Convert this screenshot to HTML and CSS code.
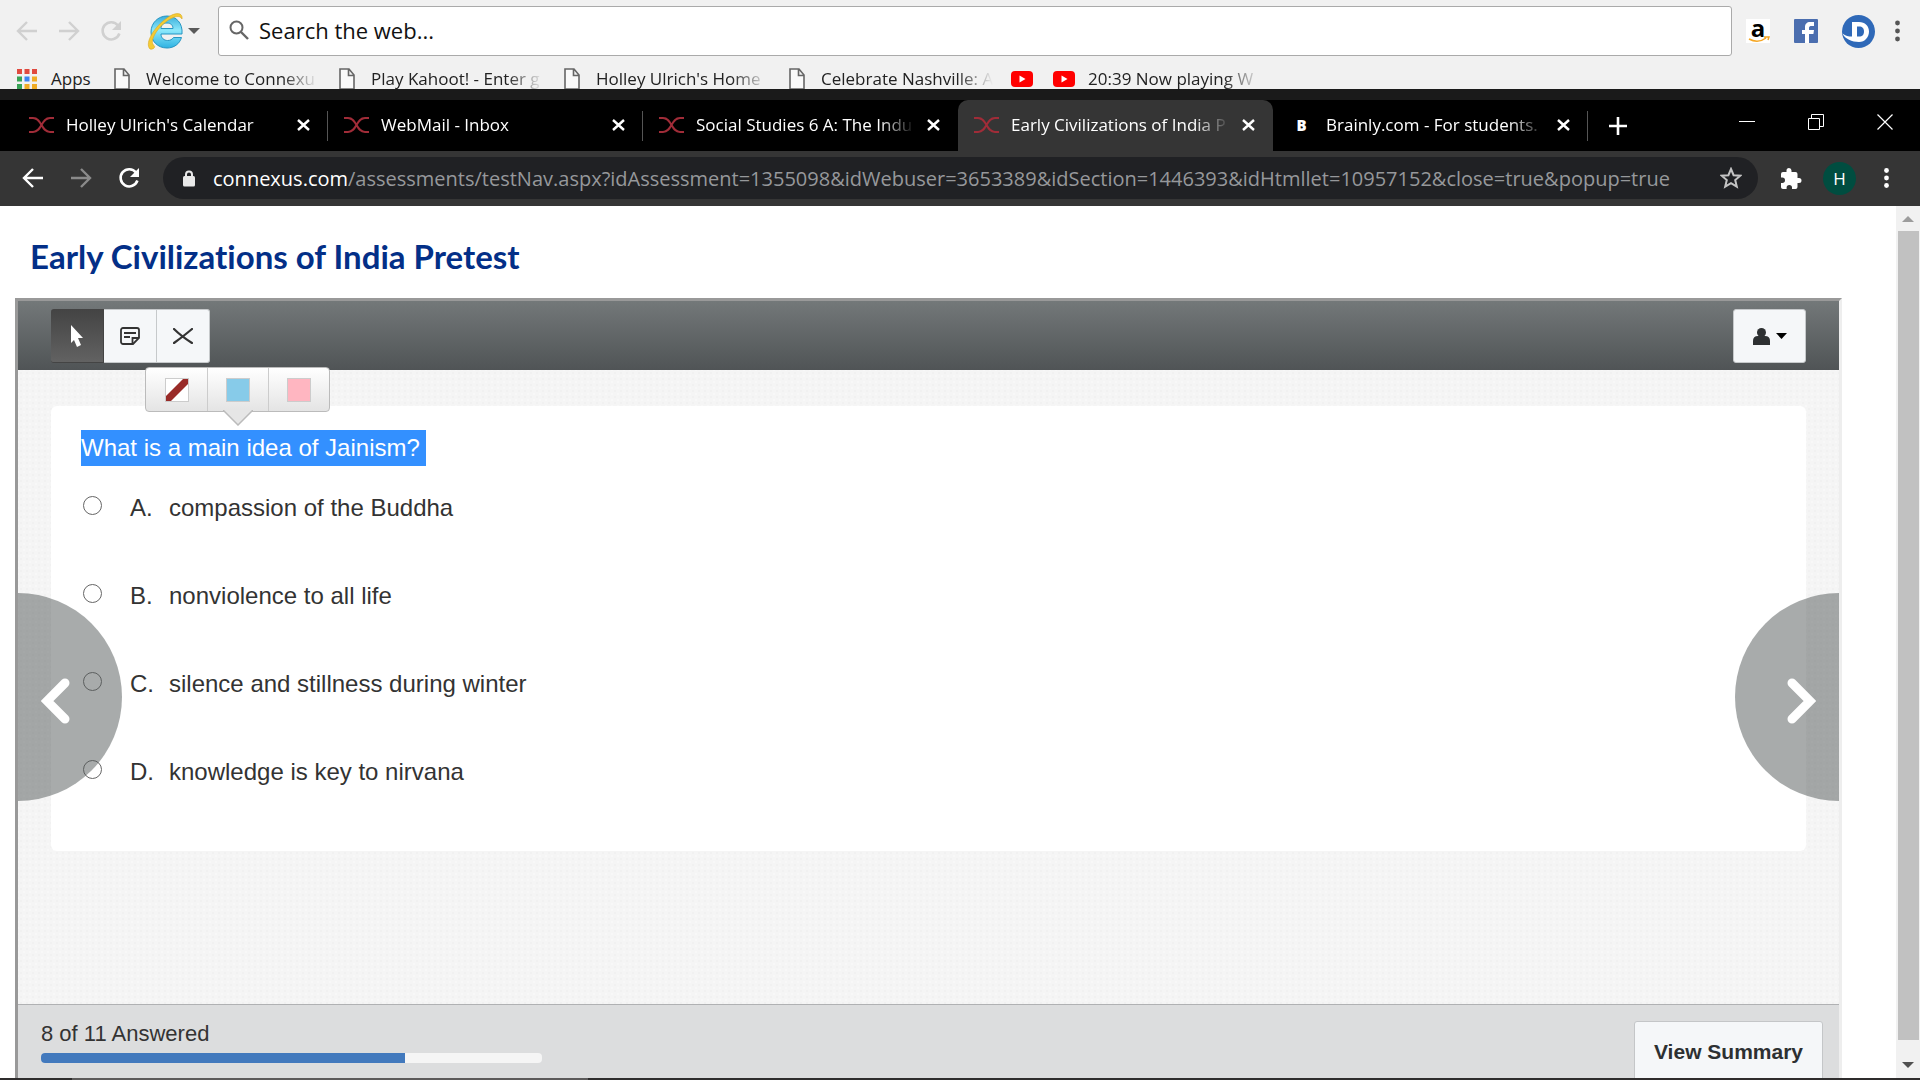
FILE: index.html
```html
<!DOCTYPE html>
<html lang="en">
<head>
    <meta charset="UTF-8">
    <meta name="viewport" content="width=device-width, initial-scale=1.0">
    <title>Early Civilizations of India Pretest</title>
    <link rel="stylesheet" href="styles.css">
</head>
<body>
    <!-- search toolbar -->
    <div class="searchbar">
      <div class="search-nav">
        <button class="icon-btn" aria-label="Back"><svg width="22" height="22" viewBox="0 0 22 22"><path d="M21 11H2M11 2l-9 9 9 9" fill="none" stroke="#d0d0d0" stroke-width="2.4"/></svg></button>
        <button class="icon-btn" aria-label="Forward"><svg width="22" height="22" viewBox="0 0 22 22"><path d="M1 11h19M11 2l9 9-9 9" fill="none" stroke="#d0d0d0" stroke-width="2.4"/></svg></button>
        <button class="icon-btn" aria-label="Reload"><svg width="22" height="22" viewBox="0 0 22 22"><path d="M18 5.5A8.6 8.6 0 1 0 19.400 13.500" fill="none" stroke="#d0d0d0" stroke-width="2.600"/><path d="M21 1v9h-9z" fill="#d0d0d0"/></svg></button>
      </div>
      <button class="icon-btn engine" aria-label="Search engine">
        <svg width="38" height="38" viewBox="0 0 38 38">
          <defs>
            <linearGradient id="ie" x1="0" y1="0" x2="0" y2="1"><stop offset="0" stop-color="#3aaedb"/><stop offset=".45" stop-color="#8ce8fb"/><stop offset="1" stop-color="#2fb2e2"/></linearGradient>
          </defs>
          <path d="M35 22H14c0 4 3 6.500 6.500 6.500 2.800 0 4.500-1 6-3h8C32.500 32 27 36 20 36 10.500 36 4 29 4 20S11 4 20 4s16 7 15 18zM14 16.500h12c0-3.500-2.500-5.500-6-5.500s-6 2-6 5.500z" fill="url(#ie)" stroke="#2795c2" stroke-width="1"/>
          <path d="M3 37C-3 31 8 14 20 6 28 0 36 0 35 7 33 3 27 4 20 9 9 17 2 30 7 33.500 9 35 6 38 3 37z" fill="#f5cb35" stroke="#d9a820" stroke-width=".6"/>
        </svg>
        <svg width="12" height="6" viewBox="0 0 12 6"><path d="M0 0h12L6 6z" fill="#5a5a5a"/></svg>
      </button>
      <form class="search-box">
        <label for="search" aria-label="Search"><svg width="20" height="20" viewBox="0 0 20 20"><circle cx="7.500" cy="7.500" r="6" fill="none" stroke="#666" stroke-width="2"/><path d="M12 12l7 7" stroke="#666" stroke-width="2.400"/></svg></label>
        <input type="text" id="search" placeholder="Search the web...">
      </form>
      <div class="shortcuts">
        <a href="#" aria-label="Amazon"><svg width="24" height="24" viewBox="0 0 24 24"><rect width="24" height="24" fill="#fff"/><text x="12" y="18" text-anchor="middle" class="logo-a">a</text><path d="M3 20q9 5 17-1M18 18h5l-1 3" fill="none" stroke="#f5a623" stroke-width="1.500"/></svg></a>
        <a href="#" aria-label="Facebook"><svg width="24" height="24" viewBox="0 0 24 24"><rect width="24" height="24" rx="1" fill="#4b6eaf"/><path d="M11 24v-9H8v-4h3V8c0-3 2-5 5-5h4v4h-2.500C16 7 15 7.600 15 9v2h5l-.6 4H15v9z" fill="#fff"/></svg></a>
        <a href="#" aria-label="Dictionary"><svg width="33" height="33" viewBox="0 0 33 33"><circle cx="16.500" cy="16.500" r="16.500" fill="#2f69b8"/><path d="M10 7h7c6 0 10 4 10 9.500S23 27 17 27C10 27 3 24 .5 18.500c3 2.500 6 3 9.500 3z" fill="#fff"/><path d="M15 11.500h2c3.500 0 5 2 5 5s-1.500 5-5 5h-2z" fill="#2f69b8"/></svg></a>
        <button class="icon-btn" aria-label="Menu"><svg width="5" height="22" viewBox="0 0 5 22" fill="#555"><circle cx="2.500" cy="3" r="2.400"/><circle cx="2.500" cy="11" r="2.400"/><circle cx="2.500" cy="19" r="2.400"/></svg></button>
      </div>
    </div>

    <div class="bookmarks">
      <a href="#" class="apps">
        <svg width="20" height="20" viewBox="0 0 20 20"><path d="M0 0h5v5H0zM7.500 0h5v5h-5zM15 0h5v5h-5z" fill="#e04a3f"/><path d="M0 7.500h5v5H0zM0 15h5v5H0z" fill="#37a355"/><path d="M7.500 7.500h5v5h-5z" fill="#3b83f0"/><path d="M15 7.500h5v5h-5zM7.500 15h5v5h-5zM15 15h5v5h-5z" fill="#f0ac25"/></svg>
        <span>Apps</span>
      </a>
      <a href="#" class="bookmark"><svg width="16" height="22" viewBox="0 0 16 22"><path d="M1 1h9l5 6v14H1zM9.500 1v6.500H15" fill="#fafafa" stroke="#666" stroke-width="1.600"/></svg><span class="fade">Welcome to Connexu</span></a>
      <a href="#" class="bookmark"><svg width="16" height="22" viewBox="0 0 16 22"><path d="M1 1h9l5 6v14H1zM9.500 1v6.500H15" fill="#fafafa" stroke="#666" stroke-width="1.600"/></svg><span class="fade">Play Kahoot! - Enter g</span></a>
      <a href="#" class="bookmark"><svg width="16" height="22" viewBox="0 0 16 22"><path d="M1 1h9l5 6v14H1zM9.500 1v6.500H15" fill="#fafafa" stroke="#666" stroke-width="1.600"/></svg><span class="fade">Holley Ulrich's Home</span></a>
      <a href="#" class="bookmark"><svg width="16" height="22" viewBox="0 0 16 22"><path d="M1 1h9l5 6v14H1zM9.500 1v6.500H15" fill="#fafafa" stroke="#666" stroke-width="1.600"/></svg><span class="fade">Celebrate Nashville: A</span></a>
      <a href="#" class="tube" aria-label="YouTube"><svg width="22" height="16" viewBox="0 0 22 16"><rect width="22" height="16" rx="4" fill="#f00"/><path d="M8.500 4.500l6 3.500-6 3.500z" fill="#fff"/></svg></a>
      <a href="#" class="tube"><svg width="22" height="16" viewBox="0 0 22 16"><rect width="22" height="16" rx="4" fill="#f00"/><path d="M8.500 4.500l6 3.500-6 3.500z" fill="#fff"/></svg><span class="fade">20:39 Now playing W</span></a>
    </div>

    <!-- browser tabs -->
    <div class="tabs">
      <div class="tab">
        <svg width="25" height="16" viewBox="0 0 25 16"><path d="M0 1h4c9 0 8 14 17 14h4M25 1h-4c-9 0-8 14-17 14H0" fill="none" stroke="#a02c38" stroke-width="2"/></svg>
        <a href="#" class="fade">Holley Ulrich's Calendar</a>
        <button class="icon-btn" aria-label="Close tab"><svg width="13" height="12" viewBox="0 0 13 12"><path d="M1 1l11 10M12 1L1 11" stroke="#fff" stroke-width="2.400"/></svg></button>
      </div>
      <div class="tab">
        <svg width="25" height="16" viewBox="0 0 25 16"><path d="M0 1h4c9 0 8 14 17 14h4M25 1h-4c-9 0-8 14-17 14H0" fill="none" stroke="#a02c38" stroke-width="2"/></svg>
        <a href="#" class="fade">WebMail - Inbox</a>
        <button class="icon-btn" aria-label="Close tab"><svg width="13" height="12" viewBox="0 0 13 12"><path d="M1 1l11 10M12 1L1 11" stroke="#fff" stroke-width="2.400"/></svg></button>
      </div>
      <div class="tab before-active">
        <svg width="25" height="16" viewBox="0 0 25 16"><path d="M0 1h4c9 0 8 14 17 14h4M25 1h-4c-9 0-8 14-17 14H0" fill="none" stroke="#a02c38" stroke-width="2"/></svg>
        <a href="#" class="fade">Social Studies 6 A: The Indu</a>
        <button class="icon-btn" aria-label="Close tab"><svg width="13" height="12" viewBox="0 0 13 12"><path d="M1 1l11 10M12 1L1 11" stroke="#fff" stroke-width="2.400"/></svg></button>
      </div>
      <div class="tab active">
        <svg width="25" height="16" viewBox="0 0 25 16"><path d="M0 1h4c9 0 8 14 17 14h4M25 1h-4c-9 0-8 14-17 14H0" fill="none" stroke="#a02c38" stroke-width="2"/></svg>
        <a href="#" class="fade">Early Civilizations of India P</a>
        <button class="icon-btn" aria-label="Close tab"><svg width="13" height="12" viewBox="0 0 13 12"><path d="M1 1l11 10M12 1L1 11" stroke="#fff" stroke-width="2.400"/></svg></button>
      </div>
      <div class="tab">
        <span class="brainly">B</span>
        <a href="#" class="fade">Brainly.com - For students.</a>
        <button class="icon-btn" aria-label="Close tab"><svg width="13" height="12" viewBox="0 0 13 12"><path d="M1 1l11 10M12 1L1 11" stroke="#fff" stroke-width="2.400"/></svg></button>
      </div>
      <button class="icon-btn new-tab" aria-label="New tab"><svg width="18" height="18" viewBox="0 0 18 18"><path d="M9 0v18M0 9h18" stroke="#fff" stroke-width="2.600"/></svg></button>
      <div class="window-controls">
        <button class="icon-btn" aria-label="Minimize"><svg width="16" height="16" viewBox="0 0 16 16"><path d="M0 7.500h16" stroke="#fff"/></svg></button>
        <button class="icon-btn" aria-label="Restore"><svg width="16" height="16" viewBox="0 0 16 16"><path d="M.5 4.500h11v11H.5zM3.500 4.500v-4h12v12h-4" fill="none" stroke="#fff"/></svg></button>
        <button class="icon-btn" aria-label="Close"><svg width="16" height="16" viewBox="0 0 16 16"><path d="M.5.5l15 15M15.500.5l-15 15" stroke="#fff" stroke-width="1.200"/></svg></button>
      </div>
    </div>

    <div class="address-bar">
      <div class="address-nav">
        <button class="icon-btn" aria-label="Back"><svg width="22" height="22" viewBox="0 0 22 22"><path d="M21 11H2M11 2l-9 9 9 9" fill="none" stroke="#fff" stroke-width="2.400"/></svg></button>
        <button class="icon-btn" aria-label="Forward"><svg width="22" height="22" viewBox="0 0 22 22"><path d="M1 11h19M11 2l9 9-9 9" fill="none" stroke="#8a8a8a" stroke-width="2.400"/></svg></button>
        <button class="icon-btn" aria-label="Reload"><svg width="22" height="22" viewBox="0 0 22 22"><path d="M18 5.500A8.600 8.600 0 1 0 19.400 13.500" fill="none" stroke="#fff" stroke-width="2.600"/><path d="M21 1v9h-9z" fill="#fff"/></svg></button>
      </div>
      <div class="address">
        <svg width="12" height="17" viewBox="0 0 12 17"><path d="M3 7V4.500a3 3 0 0 1 6 0V7" fill="none" stroke="#e8e8e8" stroke-width="2"/><rect y="6" width="12" height="10.500" rx="1.500" fill="#e8e8e8"/></svg>
        <div class="url">
          <label for="url">connexus.com</label>
          <input type="text" id="url" value="/assessments/testNav.aspx?idAssessment=1355098&amp;idWebuser=3653389&amp;idSection=1446393&amp;idHtmllet=10957152&amp;close=true&amp;popup=true">
        </div>
        <button class="icon-btn" aria-label="Bookmark this page"><svg width="22" height="22" viewBox="0 0 22 22"><path d="M11 2l2.600 6.200 6.700.5-5.100 4.300 1.600 6.600L11 16.100l-5.800 3.500L6.800 13 1.700 8.700l6.700-.5z" fill="none" stroke="#c4c4c4" stroke-width="2"/></svg></button>
      </div>
      <div class="address-tools">
        <button class="icon-btn" aria-label="Extensions"><svg width="22" height="22" viewBox="0 0 22 22"><path d="M19 11h-1.500V7a2 2 0 0 0-2-2h-4V3.500a2.500 2.500 0 0 0-5 0V5H3a2 2 0 0 0-2 2v3.500h1.300a2.700 2.700 0 0 1 0 5.400H1V20c0 1.100.9 2 2 2h3.600v-1.400a2.700 2.700 0 0 1 5.400 0V22h3.500a2 2 0 0 0 2-2v-4H19a2.500 2.500 0 0 0 0-5z" fill="#fff"/></svg></button>
        <button class="avatar">H</button>
        <button class="icon-btn" aria-label="Menu"><svg width="5" height="20" viewBox="0 0 5 20" fill="#fff"><circle cx="2.500" cy="2.500" r="2.400"/><circle cx="2.500" cy="10" r="2.400"/><circle cx="2.500" cy="17.500" r="2.400"/></svg></button>
      </div>
    </div>

    <!-- page -->
    <div class="viewport">
      <main class="page">
        <h1>Early Civilizations of India Pretest</h1>
        <div class="frame">
          <div class="toolbar">
            <div class="tools">
              <button class="tool selected" aria-label="Pointer"><svg width="16" height="24" viewBox="0 0 16 24"><path d="M2 1l12 13H9l3 7-4 2-3-7-3 3z" fill="#fff"/></svg></button>
              <button class="tool" aria-label="Note"><svg width="20" height="18" viewBox="0 0 20 18"><path d="M3 1h14a2 2 0 0 1 2 2v8l-6 6H3a2 2 0 0 1-2-2V3a2 2 0 0 1 2-2z" fill="none" stroke="#333" stroke-width="1.800"/><path d="M4 6h12M4 10h6M12.500 17v-6H19" fill="none" stroke="#333" stroke-width="1.800"/></svg></button>
              <button class="tool" aria-label="Eliminate"><svg width="20" height="16" viewBox="0 0 20 16"><path d="M1 1q7 7 18 14M19 1Q12 7 1 15" fill="none" stroke="#333" stroke-width="2.200" stroke-linecap="round"/></svg></button>
            </div>
            <button class="user-menu" aria-label="User menu">
              <svg width="17" height="17" viewBox="0 0 17 17"><circle cx="8.500" cy="4.500" r="4.500" fill="#2d3032"/><path d="M0 17v-4q0-5 5-5h7q5 0 5 5v4z" fill="#2d3032"/></svg>
              <svg width="11" height="6" viewBox="0 0 11 6"><path d="M0 0h11L5.500 6z"/></svg>
            </button>
            <div class="highlighter">
              <button aria-label="Clear highlight"><svg width="24" height="24" viewBox="0 0 24 24"><rect x=".5" y=".5" width="23" height="23" fill="#fff" stroke="#ccc"/><path d="M1 23v-5L18 1h5v5L6 23z" fill="#992b28"/></svg></button>
              <button aria-label="Blue highlight"><span class="swatch blue"></span></button>
              <button aria-label="Pink highlight"><span class="swatch pink"></span></button>
              <svg class="pointer" width="30" height="16" viewBox="0 0 30 16"><path d="M0 0l15 15L30 0" fill="#e6e6e6" stroke="#bbb" stroke-width="1.500"/></svg>
            </div>
          </div>

          <div class="workspace">
            <form class="question">
              <p><mark>What is a main idea of Jainism? </mark></p>
              <div class="answer"><input type="radio" name="answer" id="a"><label for="a"><span>A.</span>compassion of the Buddha</label></div>
              <div class="answer"><input type="radio" name="answer" id="b"><label for="b"><span>B.</span>nonviolence to all life</label></div>
              <div class="answer"><input type="radio" name="answer" id="c"><label for="c"><span>C.</span>silence and stillness during winter</label></div>
              <div class="answer"><input type="radio" name="answer" id="d"><label for="d"><span>D.</span>knowledge is key to nirvana</label></div>
            </form>
          </div>

          <div class="summary">
            <div class="progress">
              <div id="answered">8 of 11 Answered</div>
              <div class="track" role="progressbar" aria-labelledby="answered"><div class="fill" style="width: 72.7%"></div></div>
            </div>
            <button class="view-summary">View Summary</button>
          </div>

          <button class="turn prev" aria-label="Previous"><svg width="30" height="46" viewBox="0 0 30 46"><path d="M24 5L6 23l18 18" fill="none" stroke="#fff" stroke-width="9" stroke-linecap="round"/></svg></button>
          <button class="turn next" aria-label="Next"><svg width="30" height="46" viewBox="0 0 30 46"><path d="M6 5l18 18L6 41" fill="none" stroke="#fff" stroke-width="9" stroke-linecap="round"/></svg></button>
        </div>
      </main>
      <div class="scrollbar">
        <svg width="12" height="6" viewBox="0 0 12 6"><path d="M0 6h12L6 0z" fill="#9c9c9c"/></svg>
        <div class="thumb"></div>
        <svg width="12" height="6" viewBox="0 0 12 6"><path d="M0 0h12L6 6z" fill="#505050"/></svg>
      </div>
    </div>
    <div class="taskbar-edge"></div>
</body>
</html>
```
FILE: styles.css
```css
* {
  box-sizing: border-box;
}

body {
  margin: 0;
  height: 100vh;
  display: flex;
  flex-direction: column;
  overflow: hidden;
  background-color: #fff;
  font-family: "Open Sans", "Noto Sans", sans-serif;
}

button {
  font-family: inherit;
  padding: 0;
  cursor: pointer;
}

svg {
  display: block;
  flex: none;
}

a {
  color: inherit;
  text-decoration: none;
}

input[type="text"] {
  border: 0;
  padding: 0;
  outline: none;
  background: none;
  font-family: inherit;
  flex: 1;
  min-width: 0;
}

.icon-btn {
  border: 0;
  background: none;
  display: flex;
  align-items: center;
}

.fade {
  overflow: hidden;
  white-space: nowrap;
  -webkit-mask-image: linear-gradient(to right, #000 calc(100% - 36px), transparent);
  mask-image: linear-gradient(to right, #000 calc(100% - 36px), transparent);
}

/* search toolbar */
.searchbar {
  display: flex;
  align-items: center;
  flex: none;
  padding: 6px 20px 6px 16px;
  background-color: #f1f1f1;
}

.search-nav,
.address-nav {
  display: flex;
  gap: 20px;
}

.engine {
  gap: 3px;
  margin-left: 25px;
}

.search-box {
  flex: 1;
  display: flex;
  align-items: center;
  gap: 10px;
  height: 50px;
  margin-left: 18px;
  padding: 0 10px 2px;
  background-color: #fff;
  border: 1px solid #aaa;
  border-radius: 3px;
}

.search-box input {
  font-size: 22px;
  color: #111;
}

.search-box input::placeholder {
  color: #111;
  opacity: 1;
}

.shortcuts {
  display: flex;
  align-items: center;
  gap: 24px;
  margin-left: 14px;
}

.shortcuts .icon-btn {
  margin-left: -4px;
}

.logo-a {
  font: bold 24px "Open Sans", sans-serif;
}

.bookmarks {
  display: flex;
  flex: none;
  height: 27px;
  padding: 3px 17px 0;
  overflow: hidden;
  background-color: #f1f1f1;
  color: #222;
  font-size: 17px;
  line-height: 28px;
}

.bookmarks a {
  display: flex;
  align-items: center;
  height: 28px;
}

.apps {
  gap: 14px;
  width: 97px;
}

.bookmark {
  gap: 16px;
  width: 225px;
}

.bookmark .fade,
.tube .fade {
  width: 172px;
}

.tube {
  gap: 13px;
  margin-right: 20px;
}

.bookmarks .tube:nth-of-type(6) {
  margin-left: -3px;
}

/* browser tabs */
.tabs {
  display: flex;
  flex: none;
  height: 62px;
  padding-left: 13px;
  border-top: 11px solid #1a1a1a;
  background-color: #000;
  color: #fff;
}

.tab {
  position: relative;
  display: flex;
  align-items: center;
  gap: 12px;
  width: 315px;
  padding: 0 18px 2px 16px;
  font-size: 17px;
}

.tab .fade {
  flex: 1;
  line-height: 26px;
}

.tab::after {
  content: "";
  position: absolute;
  right: 0;
  top: 11px;
  width: 1px;
  height: 30px;
  background-color: #555;
}

.tab.before-active::after,
.tab.active::after {
  display: none;
}

.tab.active {
  background-color: #353535;
  border-radius: 10px 10px 0 0;
}

.brainly {
  width: 25px;
  text-align: center;
  font-size: 15px;
  font-weight: 800;
}

.new-tab {
  margin-left: 21px;
}

.window-controls {
  display: flex;
  gap: 53px;
  margin-left: auto;
  padding: 0 27px 8px 0;
}

.address-bar {
  display: flex;
  align-items: center;
  flex: none;
  height: 55px;
  padding: 0 31px 1px 22px;
  background-color: #353535;
}

.address-nav {
  gap: 26px;
}

.address {
  flex: 1;
  display: flex;
  align-items: center;
  height: 42px;
  margin-left: 23px;
  padding: 0 16px 0 20px;
  gap: 18px;
  border-radius: 21px;
  background-color: #202124;
}

.url {
  flex: 1;
  display: flex;
  align-items: center;
  font-size: 20px;
  color: #fff;
}

.url input {
  font-size: 20px;
  color: #96989b;
}

.address-tools {
  display: flex;
  align-items: center;
  gap: 21px;
  margin-left: 22px;
}

.address-tools .icon-btn:last-child {
  margin-left: 7px;
}

.avatar {
  width: 33px;
  height: 33px;
  border: 0;
  border-radius: 50%;
  background-color: #004d40;
  color: #fff;
  font-size: 17px;
}

/* page */
.viewport {
  flex: 1;
  min-height: 0;
  display: flex;
}

.page {
  flex: 1;
  display: flex;
  flex-direction: column;
  padding: 30px 54px 0 15px;
}

h1 {
  margin: 0 0 22px 15px;
  font-family: Lato, sans-serif;
  font-size: 33px;
  font-weight: bold;
  font-variant-ligatures: none;
  line-height: 40px;
  color: #032f87;
}

.frame {
  position: relative;
  flex: 1;
  min-height: 0;
  display: flex;
  flex-direction: column;
  border: 3px solid #eee;
  border-top-color: #999;
  border-left-color: #999;
  border-bottom: 0;
  color: #333;
  font-family: "Liberation Sans", Arial, sans-serif;
}

.toolbar {
  position: relative;
  z-index: 2;
  display: flex;
  justify-content: space-between;
  align-items: flex-start;
  flex: none;
  height: 69px;
  padding: 8px 33px 0;
  background: linear-gradient(#737879, #505456);
}

.tools {
  display: flex;
}

.tool,
.user-menu {
  display: flex;
  align-items: center;
  justify-content: center;
  height: 54px;
  border: 1px solid #c6c9cb;
  background-color: #f5f7f9;
}

.tool {
  width: 53px;
  border-left-width: 0;
}

.tool.selected {
  border-color: #444;
  border-radius: 3px 0 0 3px;
  background: linear-gradient(#444, #626262);
}

.tool:last-child {
  border-radius: 0 3px 3px 0;
}

.user-menu {
  gap: 6px;
  width: 73px;
  border-radius: 3px;
}

.highlighter {
  position: absolute;
  left: 127px;
  top: 66px;
  display: flex;
  border: 1px solid #bbb;
  border-radius: 4px;
  background: linear-gradient(#fff, #e4e4e4);
}

.highlighter button {
  display: flex;
  align-items: center;
  justify-content: center;
  width: 61px;
  height: 43px;
  border: 0;
  border-left: 1px solid #ccc;
  background: none;
}

.highlighter button:first-child {
  border-left: 0;
}

.swatch {
  width: 24px;
  height: 24px;
  border: 1px solid #ccc;
}

.blue {
  background-color: #87cbe9;
}

.pink {
  background-color: #ffb6c1;
}

.pointer {
  position: absolute;
  left: 77px;
  top: 42px;
}

.workspace {
  flex: 1;
  min-height: 0;
  padding: 36px 33px 0;
  background-color: #f5f5f5;
  background-image: radial-gradient(#f1f1f1 1px, transparent 1px), radial-gradient(#f8f8f8 1px, transparent 1px);
  background-size: 6px 6px;
  background-position: 0 0, 3px 3px;
}

.question {
  min-height: 445px;
  padding: 24px 30px 0;
  border-radius: 6px;
  background-color: #fff;
  font-size: 24px;
}

.question p {
  margin: 0 0 24px;
  line-height: 36px;
}

mark {
  display: inline-block;
  padding-right: 6px;
  background-color: #3390ff;
  color: #fff;
}

.answer {
  display: flex;
  align-items: flex-start;
  height: 88px;
  line-height: 36px;
}

.answer input {
  appearance: none;
  width: 19px;
  height: 19px;
  margin: 6px 28px 0 2px;
  border: 1px solid #666;
  border-radius: 50%;
  background-color: #fff;
}

.answer label {
  display: flex;
}

.answer span {
  width: 39px;
}

.summary {
  display: flex;
  align-items: flex-start;
  justify-content: space-between;
  flex: none;
  height: 74px;
  padding: 16px 16px 0 23px;
  overflow: hidden;
  border-top: 1px solid #b0b1b3;
  background-color: #dcddde;
}

.progress {
  width: 501px;
  font-size: 22px;
  line-height: 26px;
}

.track {
  height: 10px;
  margin-top: 6px;
  overflow: hidden;
  border-radius: 4px;
  background-color: #f5f5f5;
}

.fill {
  height: 100%;
  background-color: #4279bd;
}

.view-summary {
  width: 189px;
  height: 62px;
  border: 1px solid #c4c6c8;
  border-radius: 3px;
  background-color: #f5f7f9;
  color: #2d3032;
  font-size: 21px;
  font-weight: bold;
}

.turn {
  position: absolute;
  z-index: 1;
  top: 51%;
  display: flex;
  align-items: center;
  width: 104px;
  height: 208px;
  padding: 8px 23px 0;
  transform: translateY(-50%);
  border: 0;
  background-color: rgba(82, 88, 88, 0.5);
}

.prev {
  left: 0;
  border-radius: 0 104px 104px 0;
}

.next {
  right: 0;
  justify-content: flex-end;
  border-radius: 104px 0 0 104px;
}

.scrollbar {
  display: flex;
  flex-direction: column;
  align-items: center;
  justify-content: space-between;
  width: 24px;
  padding: 10px 0;
  background-color: #f1f1f1;
}

.thumb {
  flex: 1;
  width: 21px;
  margin: 9px 0 22px;
  background-color: #c1c1c1;
}

.taskbar-edge {
  flex: none;
  height: 2px;
  background: linear-gradient(to right, #2f2d2d 72px, #5c5a5a 72px, #5c5a5a 588px, #2f2d2d 588px);
}
```
